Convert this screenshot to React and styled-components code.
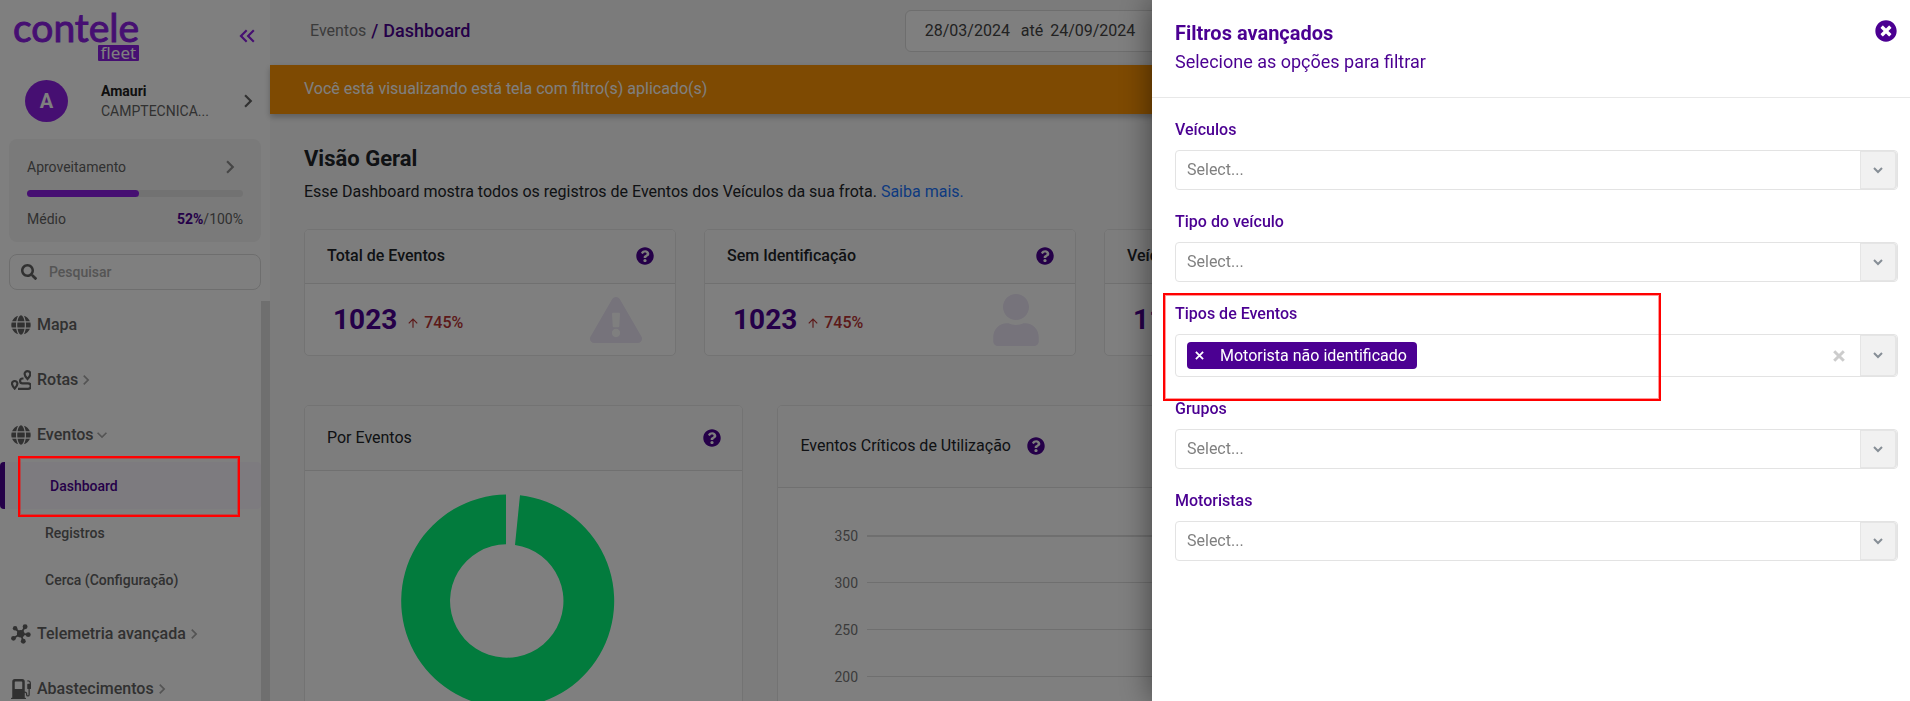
import React, { useState } from 'react';
import styled, { createGlobalStyle } from 'styled-components';
import {
	FaGlobe,
	FaSearch,
	FaQuestionCircle,
	FaExclamationTriangle,
	FaUser,
	FaTimesCircle,
	FaCar,
} from 'react-icons/fa';
import {
	MdKeyboardDoubleArrowLeft,
	MdChevronRight,
	MdArrowUpward,
} from 'react-icons/md';
import { BsFuelPumpFill } from 'react-icons/bs';

const GlobalStyle = createGlobalStyle`
	* {
		box-sizing: border-box;
	}

	body {
		margin: 0;
		overflow: hidden;
		font-family: Roboto, sans-serif;
		font-size: 16px;
		line-height: 24px;
		color: #212529;
	}

	button, input, select {
		font: inherit;
		color: inherit;
		margin: 0;
		padding: 0;
		border: 0;
		background: none;
		outline: none;
	}

	button {
		display: flex;
		cursor: pointer;
	}

	ul {
		list-style: none;
		margin: 0;
		padding: 0;
	}

	h1, h2, h3, p {
		margin: 0;
		font-weight: 500;
	}

	a {
		color: inherit;
		text-decoration: none;
	}

	svg {
		display: block;
		flex-shrink: 0;
	}
`;

const Page = styled.div`
	display: flex;
	height: 100vh;
	overflow: hidden;
`;

/* ---------- sidebar ---------- */

const Sidebar = styled.aside`
	display: flex;
	flex-direction: column;
	flex: 0 0 270px;
	background: #fff;
	color: #626262;
`;

const Brand = styled.div`
	display: flex;
	align-items: center;
	justify-content: space-between;
	height: 71px;
	padding: 0 10px 0 13px;
	color: #8d1fe4;
`;

const Logo = styled.div`
	display: flex;
	flex-direction: column;
	align-items: flex-end;
	gap: 2px;
	font-family: Lato, sans-serif;
	font-size: 39px;
	line-height: 32px;
	-webkit-text-stroke: 1px #8d1fe4;
`;

const LogoTag = styled.span`
	padding: 0 3px;
	border-radius: 1px;
	background: #8d1fe4;
	color: #fff;
	font-family: "Noto Sans", sans-serif;
	font-size: 17px;
	line-height: 16px;
	-webkit-text-stroke: 0;
`;

const Account = styled.div`
	display: flex;
	align-items: center;
	height: 60px;
	padding: 0 9px 0 25px;
`;

const Avatar = styled.div`
	width: 43px;
	height: 42px;
	margin-right: 33px;
	border-radius: 50%;
	background: #8d1fe4;
	color: #fff;
	font-size: 20px;
	font-weight: 700;
	line-height: 42px;
	text-align: center;
`;

const AccountText = styled.div`
	flex: 1;
	font-size: 14px;
	line-height: 20px;

	strong {
		display: block;
		color: #212121;
		font-weight: 700;
	}
`;

const Usage = styled.section`
	display: flex;
	flex-direction: column;
	gap: 10px;
	margin: 8px 9px 12px;
	padding: 15px 18px 11px;
	border-radius: 8px;
	background: #f5f5f5;
	font-size: 14px;
`;

const UsageRow = styled.div`
	display: flex;
	align-items: center;
	justify-content: space-between;

	b {
		color: #4b0092;
		font-weight: 700;
	}
`;

const Bar = styled.div`
	height: 7px;
	border-radius: 4px;
	background: #e4e4e4;
`;

const BarFill = styled.div`
	height: 7px;
	border-radius: 4px;
	background: #8d1fe4;
`;

const Search = styled.label`
	display: flex;
	align-items: center;
	gap: 12px;
	height: 36px;
	margin: 0 9px 7px;
	padding: 0 11px;
	border: 1px solid #dcdcdc;
	border-radius: 8px;

	input {
		flex: 1;
		min-width: 0;
		font-size: 14px;
		font-weight: 500;
	}

	input::placeholder {
		color: #aaa;
		opacity: 1;
	}
`;

const NavArea = styled.div`
	display: flex;
	flex: 1;
	min-height: 0;
	overflow: hidden;
`;

const Nav = styled.nav`
	flex: 1;
`;

const SubMenu = styled.ul`
	padding-bottom: 3px;
`;

const Track = styled.div`
	width: 9px;
	margin-top: 4px;
	background: #dedede;
`;

const NavLink = styled.a`
	display: flex;
	align-items: center;
	height: 55px;
	padding-left: 11px;
	font-weight: 500;

	span {
		margin-left: 6px;
	}
`;

const Arrow = styled(MdChevronRight)`
	margin-left: -2px;
	color: #a8a8a8;
	transform: ${props => (props.$open ? 'rotate(90deg)' : 'none')};
`;

const SubItem = styled.li`
	position: relative;
	display: flex;
	align-items: center;
	height: 47px;
	padding-left: 45px;
	border-left: ${props => (props.$active ? '5px solid #4b0092' : '0')};
	border-radius: 4px;
	background: ${props => (props.$active ? '#fbf6ff' : 'none')};
	color: ${props => (props.$active ? '#4b0092' : 'inherit')};
	font-size: 14px;
	font-weight: 500;
`;

/* red frame drawn over everything, overlay included */
const Highlight = styled.div`
	position: absolute;
	z-index: 30;
	top: ${props => props.$top}px;
	left: ${props => props.$left}px;
	width: ${props => props.$width}px;
	height: ${props => props.$height}px;
	border: 2px solid #f00;
	box-shadow: inset 0 0 0 1px rgba(255, 0, 0, 0.4);
	pointer-events: none;
`;

/* ---------- main ---------- */

const Main = styled.main`
	flex: 1;
	min-width: 0;
	background: #f9f9f9;
`;

const TopBar = styled.header`
	display: grid;
	grid-template-columns: 3fr 5fr;
	gap: 12px;
	align-items: center;
	height: 65px;
	padding: 0 34px 4px 40px;
	background: #f7f7f7;
`;

const Breadcrumb = styled.div`
	display: flex;
	gap: 5px;
	color: #777;

	b {
		color: #4b0092;
		font-size: 18px;
		font-weight: 500;
	}
`;

const DateRange = styled.div`
	display: flex;
	align-items: center;
	gap: 7px;
	width: 300px;
	height: 42px;
	padding: 0 19px;
	border: 1px solid #dcdcdc;
	border-radius: 6px;
	background: #fff;
	color: #444;

	input {
		width: 89px;
	}
`;

const Banner = styled.div`
	position: relative;
	height: 49px;
	padding: 12px 34px;
	background: #fd9404;
	box-shadow: 0 3px 6px rgba(0, 0, 0, 0.25);
	color: #fff;
`;

const Content = styled.div`
	padding: 29px 34px;
`;

const Title = styled.h1`
	font-size: 22px;
	font-weight: 700;
	line-height: 32px;
`;

const Intro = styled.p`
	margin: 5px 0 25px;
	font-weight: 400;

	a {
		color: #1a75ff;
	}
`;

const Cards = styled.div`
	display: grid;
	grid-template-columns: ${props => props.$columns};
	gap: ${props => props.$gap}px;
	margin-bottom: 49px;
`;

const Card = styled.section`
	border: 1px solid #e6e6e6;
	border-radius: 5px;
	background: #fff;
	overflow: hidden;
`;

const CardHead = styled.div`
	display: flex;
	align-items: center;
	justify-content: ${props => (props.$start ? 'flex-start' : 'space-between')};
	gap: 16px;
	height: ${props => props.$height}px;
	padding: 0 21px 1px 22px;
	border-bottom: 1px solid #e0e0e0;
	background: #fbfbfb;

	h2 {
		font-size: 16px;
		font-weight: ${props => (props.$light ? 400 : 500)};
	}

	button {
		color: #4b0092;
	}
`;

const CardBody = styled.div`
	display: flex;
	align-items: center;
	height: 71px;
	padding: 0 23px 0 28px;
`;

const Total = styled.strong`
	margin-right: 9px;
	color: #4b0092;
	font-size: 28px;
	font-weight: 700;
`;

const Growth = styled.span`
	display: flex;
	align-items: center;
	gap: 4px;
	padding-top: 6px;
	color: #b83232;
	font-weight: 500;
`;

const Figure = styled.div`
	display: flex;
	justify-content: center;
	width: 72px;
	margin-left: auto;
	color: #ece6f6;
`;

const DonutBody = styled.div`
	padding-top: 23px;
`;

const Scale = styled.ul`
	padding: 24px 23px 24px 56px;
	color: #777;
	font-size: 14px;
`;

const ScaleRow = styled.li`
	display: flex;
	align-items: center;
	gap: 9px;
	height: 47px;

	&::after {
		content: "";
		flex: 1;
		border-top: 1px solid #dedede;
	}

	&:first-child::after {
		border-top-width: 2px;
	}
`;

/* ---------- drawer ---------- */

const Overlay = styled.div`
	position: fixed;
	inset: 0;
	z-index: 10;
	background: rgba(0, 0, 0, 0.5);
`;

const Drawer = styled.aside`
	position: fixed;
	top: 0;
	right: 0;
	bottom: 0;
	z-index: 20;
	width: 100%;
	max-width: 758px;
	background: #fff;
	box-shadow: 0 0 30px rgba(0, 0, 0, 0.5);
	color: #4b0092;
`;

const DrawerHead = styled.header`
	display: flex;
	align-items: flex-start;
	justify-content: space-between;
	padding: 19px 13px 20px 23px;
	border-bottom: 1px solid #e8e8e8;

	h2 {
		font-size: 20px;
		font-weight: 700;
		line-height: 28px;
	}

	p {
		font-size: 18px;
		font-weight: 400;
		line-height: 30px;
	}

	button {
		margin-top: 1px;
	}
`;

const Form = styled.form`
	display: flex;
	flex-direction: column;
	gap: 20px;
	padding: 20px 12px 20px 23px;
`;

const Field = styled.div`
	position: relative;
	display: flex;
	flex-direction: column;
	gap: 8px;

	label {
		font-weight: 500;
	}
`;

const Control = styled.div`
	display: flex;
	align-items: center;
	min-height: 40px;
	padding-left: 11px;
	border: 1px solid #e3e3e3;
	border-radius: 4px;

	select {
		flex: 1;
		align-self: stretch;
		appearance: none;
		color: #808080;
	}
`;

const Toggle = styled.span`
	display: flex;
	align-items: center;
	justify-content: center;
	align-self: stretch;
	width: 37px;
	border: 1px solid #e5e5e5;
	border-right-width: 2px;
	border-radius: 0 4px 4px 0;
	background: #f1f1f1;
`;

const Chip = styled.span`
	display: flex;
	align-items: center;
	gap: 16px;
	height: 27px;
	margin: 7px 0;
	padding: 0 10px 0 8px;
	border-radius: 4px;
	background: #4b0092;
	color: #fff;
`;

const Clear = styled.button`
	margin-right: 15px;
	color: #ccc;
`;

const RouteIcon = () => (
	<svg width="20" height="20" viewBox="0 0 20 20" fill="none" stroke="currentColor" strokeWidth="2.2">
		<path d="M16.5 1.2a2.9 2.9 0 0 1 2.9 2.9c0 1.9-2.9 5-2.9 5s-2.9-3.1-2.9-5a2.9 2.9 0 0 1 2.9-2.9z" />
		<path d="M3.7 11a2.7 2.7 0 0 1 2.7 2.7c0 1.8-2.7 4.9-2.7 4.9s-2.7-3.1-2.7-4.9a2.7 2.7 0 0 1 2.7-2.7z" />
		<path d="M12.5 8.5h-1a2.2 2.2 0 0 0 0 4.8h5.5a2.8 2.8 0 0 1 0 5.6h-10" />
	</svg>
);

const HubIcon = () => (
	<svg width="20" height="20" viewBox="0 0 22 22" fill="currentColor">
		<path
			d="M4.5 4.7l6.2 6M15.5 3l-4.8 7.7M19 11.7l-8.3-1M13.5 19l-2.8-8.3M2.5 15.7l8.2-5"
			stroke="currentColor"
			strokeWidth="2"
		/>
		<circle cx="10.7" cy="10.7" r="4.2" />
		<circle cx="4.5" cy="4.7" r="2.5" />
		<circle cx="15.5" cy="3" r="2.7" />
		<circle cx="19" cy="11.7" r="2.7" />
		<circle cx="13.5" cy="19" r="2.7" />
		<circle cx="2.7" cy="15.7" r="2.6" />
	</svg>
);

const Cross = ({ size, weight }) => (
	<svg width={size} height={size} viewBox="0 0 10 10" stroke="currentColor" strokeWidth={weight}>
		<path d="M1 1l8 8M9 1l-8 8" />
	</svg>
);

const Chevron = () => (
	<svg width="10" height="7" viewBox="0 0 10 7" fill="none" stroke="#868e96" strokeWidth="2">
		<path d="M1 1l4 4 4-4" />
	</svg>
);

const Donut = () => (
	<svg width="406" height="214" viewBox="0 0 406 214">
		<path
			fill="#04f67a"
			d="M215 1.2A106.5 106.5 0 1 1 201 .5V50.3A56.7 56.7 0 1 0 210 50.9z"
		/>
	</svg>
);

const Help = () => (
	<button type="button" aria-label="Ajuda">
		<FaQuestionCircle size={18} />
	</button>
);

const stats = [
	{ title: 'Total de Eventos', total: '1023', growth: '745%', icon: <FaExclamationTriangle size={52} /> },
	{ title: 'Sem Identificação', total: '1023', growth: '745%', icon: <FaUser size={52} /> },
	{ title: 'Veículos', total: '11', icon: <FaCar size={52} /> },
];

const fields = [
	{ id: 'veiculos', label: 'Veículos' },
	{ id: 'tipo-veiculo', label: 'Tipo do veículo' },
	{ id: 'tipos-eventos', label: 'Tipos de Eventos', multi: true },
	{ id: 'grupos', label: 'Grupos' },
	{ id: 'motoristas', label: 'Motoristas' },
];

const SelectField = ({ id, label, multi }) => {
	const [ chosen, setChosen ] = useState(multi ? 'Motorista não identificado' : '');

	return (
		<Field>
			<label htmlFor={id}>{label}</label>
			<Control>
				{chosen ? (
					<Chip>
						<button type="button" aria-label="Remover" onClick={() => setChosen('')}>
							<Cross size={9} weight={2} />
						</button>
						{chosen}
					</Chip>
				) : null}
				<select id={id}>
					<option>{chosen ? '' : 'Select...'}</option>
				</select>
				{chosen ? (
					<Clear type="button" aria-label="Limpar" onClick={() => setChosen('')}>
						<Cross size={12} weight={2.5} />
					</Clear>
				) : null}
				<Toggle>
					<Chevron />
				</Toggle>
			</Control>
			{multi ? <Highlight $top={-9} $left={-12} $width={498} $height={108} /> : null}
		</Field>
	);
};

const Menu = () => (
	<Sidebar>
		<Brand>
			<Logo>
				contele
				<LogoTag>fleet</LogoTag>
			</Logo>
			<button type="button" aria-label="Recolher menu">
				<MdKeyboardDoubleArrowLeft size={26} />
			</button>
		</Brand>
		<Account>
			<Avatar>A</Avatar>
			<AccountText>
				<strong>Amauri</strong>
				CAMPTECNICA...
			</AccountText>
			<MdChevronRight size={26} />
		</Account>
		<Usage>
			<UsageRow>
				Aproveitamento
				<MdChevronRight size={26} color="#8c8c8c" />
			</UsageRow>
			<Bar>
				<BarFill style={{ width: '52%' }} />
			</Bar>
			<UsageRow>
				Médio
				<span>
					<b>52%</b>/100%
				</span>
			</UsageRow>
		</Usage>
		<Search>
			<FaSearch size={16} />
			<input type="text" placeholder="Pesquisar" aria-label="Pesquisar" />
		</Search>
		<NavArea>
			<Nav>
				<NavLink href="#mapa">
					<FaGlobe size={20} />
					<span>Mapa</span>
				</NavLink>
				<NavLink href="#rotas">
					<RouteIcon />
					<span>Rotas</span>
					<Arrow size={20} />
				</NavLink>
				<NavLink href="#eventos">
					<FaGlobe size={20} />
					<span>Eventos</span>
					<Arrow size={20} $open />
				</NavLink>
				<SubMenu>
					<SubItem $active>
						<a href="#dashboard">Dashboard</a>
						<Highlight $top={-6} $left={13} $width={222} $height={61} />
					</SubItem>
					<SubItem>
						<a href="#registros">Registros</a>
					</SubItem>
					<SubItem>
						<a href="#cerca">Cerca (Configuração)</a>
					</SubItem>
				</SubMenu>
				<NavLink href="#telemetria">
					<HubIcon />
					<span>Telemetria avançada</span>
					<Arrow size={20} />
				</NavLink>
				<NavLink href="#abastecimentos">
					<BsFuelPumpFill size={20} />
					<span>Abastecimentos</span>
					<Arrow size={20} />
				</NavLink>
			</Nav>
			<Track />
		</NavArea>
	</Sidebar>
);

const App = () => (
	<>
		<GlobalStyle />
		<Page>
			<Menu />
			<Main>
				<TopBar>
					<Breadcrumb>
						<a href="#eventos">Eventos</a>
						<b>/</b>
						<b>Dashboard</b>
					</Breadcrumb>
					<DateRange>
						<input type="text" aria-label="Data inicial" defaultValue="28/03/2024" />
						até
						<input type="text" aria-label="Data final" defaultValue="24/09/2024" />
					</DateRange>
				</TopBar>
				<Banner>Você está visualizando está tela com filtro(s) aplicado(s)</Banner>
				<Content>
					<Title>Visão Geral</Title>
					<Intro>
						Esse Dashboard mostra todos os registros de Eventos dos Veículos da sua frota.{' '}
						<a href="#ajuda">Saiba mais.</a>
					</Intro>
					<Cards $columns="repeat(4, 1fr)" $gap={28}>
						{stats.map(stat => (
							<Card key={stat.title}>
								<CardHead $height={54}>
									<h2>{stat.title}</h2>
									<Help />
								</CardHead>
								<CardBody>
									<Total>{stat.total}</Total>
									{stat.growth ? (
										<Growth>
											<MdArrowUpward size={14} />
											{stat.growth}
										</Growth>
									) : null}
									<Figure>{stat.icon}</Figure>
								</CardBody>
							</Card>
						))}
					</Cards>
					<Cards $columns="2fr 5fr" $gap={34}>
						<Card>
							<CardHead $height={65} $light>
								<h2>Por Eventos</h2>
								<Help />
							</CardHead>
							<DonutBody>
								<Donut />
							</DonutBody>
						</Card>
						<Card>
							<CardHead $height={82} $light $start>
								<h2>Eventos Críticos de Utilização</h2>
								<Help />
							</CardHead>
							<Scale>
								{[ 350, 300, 250, 200 ].map(value => (
									<ScaleRow key={value}>{value}</ScaleRow>
								))}
							</Scale>
						</Card>
					</Cards>
				</Content>
			</Main>
		</Page>
		<Overlay />
		<Drawer>
			<DrawerHead>
				<div>
					<h2>Filtros avançados</h2>
					<p>Selecione as opções para filtrar</p>
				</div>
				<button type="button" aria-label="Fechar">
					<FaTimesCircle size={22} />
				</button>
			</DrawerHead>
			<Form>
				{fields.map(field => (
					<SelectField key={field.id} {...field} />
				))}
			</Form>
		</Drawer>
	</>
);

export default App;
